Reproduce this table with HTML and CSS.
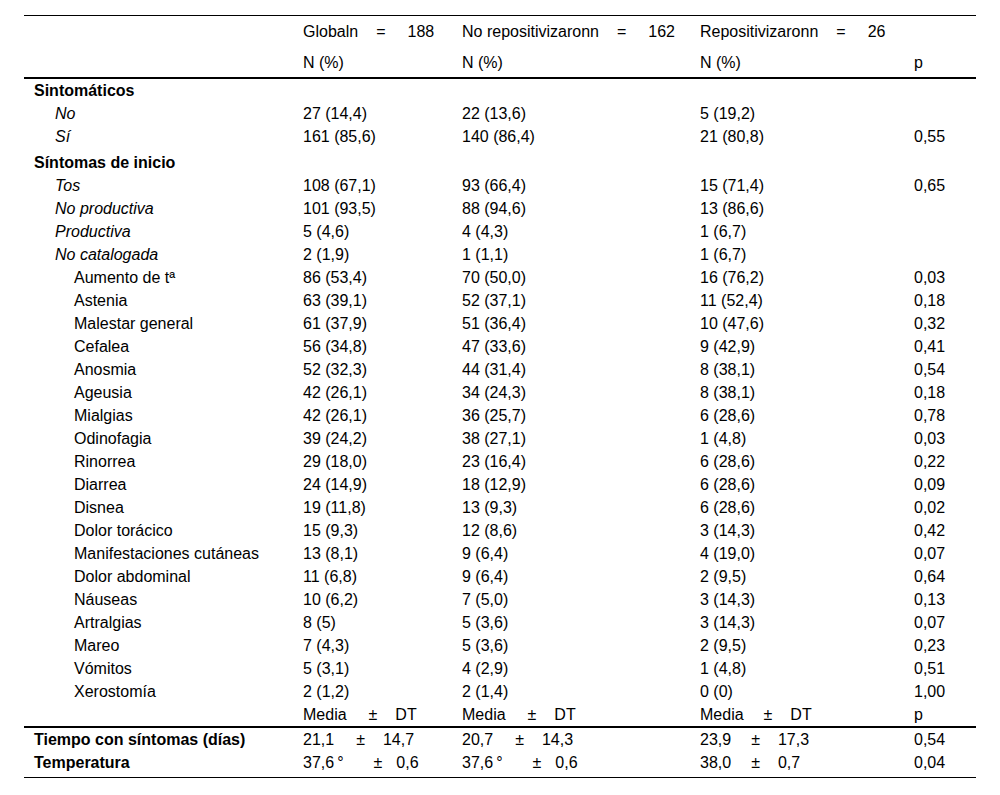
FILE: index.html
```html
<!DOCTYPE html>
<html lang="es">
<head>
<meta charset="utf-8">
<title>Tabla síntomas</title>
<link rel="stylesheet" href="styles.css">
</head>
<body>
<table class="tbl">
  <colgroup>
    <col class="c-label"><col class="c-glob"><col class="c-norep"><col class="c-rep"><col class="c-p">
  </colgroup>
  <thead>
    <tr class="h1">
      <th></th>
      <th>Globaln<span class="op">=</span>188</th>
      <th>No repositivizaronn<span class="op">=</span>162</th>
      <th>Repositivizaronn<span class="op">=</span>26</th>
      <th></th>
    </tr>
    <tr class="h2">
      <th></th><th>N (%)</th><th>N (%)</th><th>N (%)</th><th>p</th>
    </tr>
  </thead>
  <tbody>
    <tr><td class="l0">Sintomáticos</td><td></td><td></td><td></td><td></td></tr>
    <tr><td class="l1">No</td><td>27 (14,4)</td><td>22 (13,6)</td><td>5 (19,2)</td><td></td></tr>
    <tr><td class="l1">Sí</td><td>161 (85,6)</td><td>140 (86,4)</td><td>21 (80,8)</td><td>0,55</td></tr>
    <tr class="grp"><td class="l0">Síntomas de inicio</td><td></td><td></td><td></td><td></td></tr>
    <tr><td class="l1">Tos</td><td>108 (67,1)</td><td>93 (66,4)</td><td>15 (71,4)</td><td>0,65</td></tr>
    <tr><td class="l1">No productiva</td><td>101 (93,5)</td><td>88 (94,6)</td><td>13 (86,6)</td><td></td></tr>
    <tr><td class="l1">Productiva</td><td>5 (4,6)</td><td>4 (4,3)</td><td>1 (6,7)</td><td></td></tr>
    <tr><td class="l1">No catalogada</td><td>2 (1,9)</td><td>1 (1,1)</td><td>1 (6,7)</td><td></td></tr>
    <tr><td class="l2">Aumento de tª</td><td>86 (53,4)</td><td>70 (50,0)</td><td>16 (76,2)</td><td>0,03</td></tr>
    <tr><td class="l2">Astenia</td><td>63 (39,1)</td><td>52 (37,1)</td><td>11 (52,4)</td><td>0,18</td></tr>
    <tr><td class="l2">Malestar general</td><td>61 (37,9)</td><td>51 (36,4)</td><td>10 (47,6)</td><td>0,32</td></tr>
    <tr><td class="l2">Cefalea</td><td>56 (34,8)</td><td>47 (33,6)</td><td>9 (42,9)</td><td>0,41</td></tr>
    <tr><td class="l2">Anosmia</td><td>52 (32,3)</td><td>44 (31,4)</td><td>8 (38,1)</td><td>0,54</td></tr>
    <tr><td class="l2">Ageusia</td><td>42 (26,1)</td><td>34 (24,3)</td><td>8 (38,1)</td><td>0,18</td></tr>
    <tr><td class="l2">Mialgias</td><td>42 (26,1)</td><td>36 (25,7)</td><td>6 (28,6)</td><td>0,78</td></tr>
    <tr><td class="l2">Odinofagia</td><td>39 (24,2)</td><td>38 (27,1)</td><td>1 (4,8)</td><td>0,03</td></tr>
    <tr><td class="l2">Rinorrea</td><td>29 (18,0)</td><td>23 (16,4)</td><td>6 (28,6)</td><td>0,22</td></tr>
    <tr><td class="l2">Diarrea</td><td>24 (14,9)</td><td>18 (12,9)</td><td>6 (28,6)</td><td>0,09</td></tr>
    <tr><td class="l2">Disnea</td><td>19 (11,8)</td><td>13 (9,3)</td><td>6 (28,6)</td><td>0,02</td></tr>
    <tr><td class="l2">Dolor torácico</td><td>15 (9,3)</td><td>12 (8,6)</td><td>3 (14,3)</td><td>0,42</td></tr>
    <tr><td class="l2">Manifestaciones cutáneas</td><td>13 (8,1)</td><td>9 (6,4)</td><td>4 (19,0)</td><td>0,07</td></tr>
    <tr><td class="l2">Dolor abdominal</td><td>11 (6,8)</td><td>9 (6,4)</td><td>2 (9,5)</td><td>0,64</td></tr>
    <tr><td class="l2">Náuseas</td><td>10 (6,2)</td><td>7 (5,0)</td><td>3 (14,3)</td><td>0,13</td></tr>
    <tr><td class="l2">Artralgias</td><td>8 (5)</td><td>5 (3,6)</td><td>3 (14,3)</td><td>0,07</td></tr>
    <tr><td class="l2">Mareo</td><td>7 (4,3)</td><td>5 (3,6)</td><td>2 (9,5)</td><td>0,23</td></tr>
    <tr><td class="l2">Vómitos</td><td>5 (3,1)</td><td>4 (2,9)</td><td>1 (4,8)</td><td>0,51</td></tr>
    <tr><td class="l2">Xerostomía</td><td>2 (1,2)</td><td>2 (1,4)</td><td>0 (0)</td><td>1,00</td></tr>
    <tr class="sub"><td></td><td>Media<span class="pm">±</span>DT</td><td>Media<span class="pm">±</span>DT</td><td class="rep">Media<span class="pm">±</span>DT</td><td>p</td></tr>
    <tr><td class="l0">Tiempo con síntomas (días)</td><td>21,1<span class="pm">±</span>14,7</td><td>20,7<span class="pm">±</span>14,3</td><td class="rep">23,9<span class="pm">±</span>17,3</td><td>0,54</td></tr>
    <tr class="last"><td class="l0">Temperatura</td><td>37,6<span class="deg">°</span><span class="pm pm-wide">±</span>0,6</td><td>37,6<span class="deg">°</span><span class="pm pm-wide">±</span>0,6</td><td class="rep">38,0<span class="pm">±</span>0,7</td><td>0,04</td></tr>
  </tbody>
</table>
</body>
</html>
```

FILE: styles.css
```css
html, body {
  margin: 0;
  padding: 0;
  background: #fff;
}
body {
  font-family: "Liberation Sans", Arial, sans-serif;
  font-size: 16px;
  color: #000;
}
.tbl {
  margin: 15px 0 0 24px;
  width: 952px;
  table-layout: fixed;
  border-collapse: collapse;
  border-top: 1px solid #000;
  border-bottom: 1px solid #000;
}
.c-label { width: 269px; }
.c-glob { width: 159px; }
.c-norep { width: 238px; }
.c-rep { width: 214px; }
.c-p { width: 72px; }

.tbl th, .tbl td {
  padding: 2px 0 2px 10px;
  line-height: 19px;
  text-align: left;
  font-weight: normal;
  white-space: nowrap;
  vertical-align: middle;
}
.h1 th { height: 31px; padding-top: 0; padding-bottom: 0; }
.h2 th { height: 30px; padding-top: 0; padding-bottom: 0; }
.h2 { border-bottom: 2px solid #000; }

.op { margin: 0 22px 0 18px; }
.pm { margin: 0 18px 0 22px; }
.pm-wide { margin-left: 30px; margin-right: 14px; }
.rep .pm { margin: 0 18px 0 20px; }
.deg { margin-left: 3px; }

.tbl td.l0 { font-weight: bold; }
.tbl td.l1 { font-style: italic; padding-left: 31px; }
.tbl td.l2 { padding-left: 50px; }

.grp td { padding-top: 5px; }
.sub { border-bottom: 2px solid #000; }
.last td { padding-bottom: 5px; }
```
